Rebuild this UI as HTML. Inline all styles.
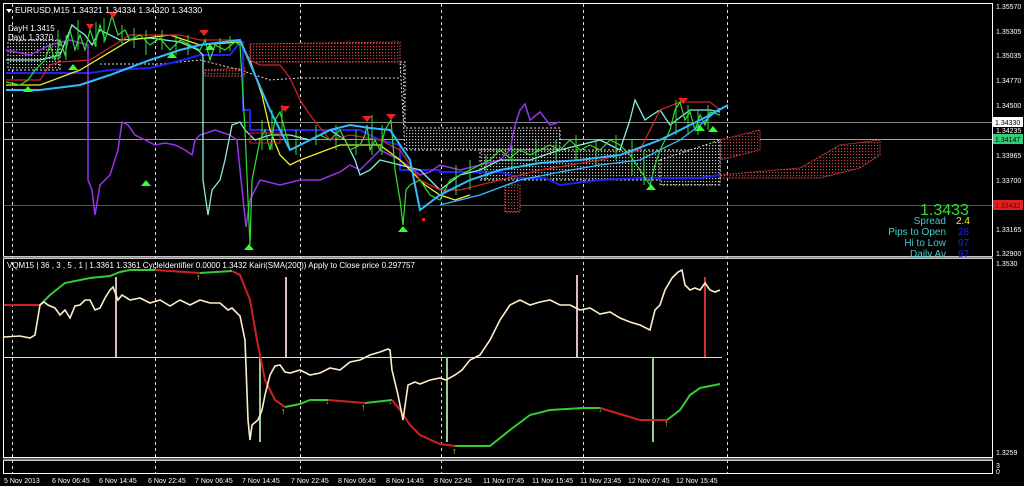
<!DOCTYPE html>
<html><head><meta charset="utf-8"><style>
html,body{margin:0;padding:0;background:#000;width:1024px;height:486px;overflow:hidden}
svg{display:block}
text{font-family:"Liberation Sans",sans-serif}
</style></head><body>
<svg width="1024" height="486" viewBox="0 0 1024 486" xmlns="http://www.w3.org/2000/svg">
<defs>
<pattern id="rd" width="3" height="3" patternUnits="userSpaceOnUse"><rect width="3" height="3" fill="#000"/><rect x="1" y="1" width="1.2" height="1.2" fill="#c44"/></pattern>
<pattern id="wd" width="3" height="3" patternUnits="userSpaceOnUse"><rect width="3" height="3" fill="#000"/><rect x="1" y="1" width="1.2" height="1.2" fill="#ccc"/></pattern>
</defs>
<rect width="1024" height="486" fill="#000"/>
<rect x="3.5" y="3.5" width="989" height="253" fill="none" stroke="#fff" stroke-width="1"/>
<rect x="3.5" y="258.5" width="989" height="199" fill="none" stroke="#fff" stroke-width="1"/>
<rect x="3.5" y="460.5" width="989" height="13" fill="none" stroke="#fff" stroke-width="1"/>
<line x1="3" y1="257.5" x2="993" y2="257.5" stroke="#888" stroke-width="2"/>
<line x1="3" y1="459.5" x2="993" y2="459.5" stroke="#888" stroke-width="2"/>
<g stroke="#ddd" stroke-dasharray="3,3" stroke-width="1">
<line x1="12.5" y1="4" x2="12.5" y2="473"/><line x1="155.5" y1="4" x2="155.5" y2="473"/>
<line x1="300.5" y1="4" x2="300.5" y2="473"/><line x1="441.5" y1="4" x2="441.5" y2="473"/>
<line x1="583.5" y1="4" x2="583.5" y2="473"/><line x1="727.5" y1="4" x2="727.5" y2="473"/>
</g>
<line x1="4" y1="122.5" x2="992" y2="122.5" stroke="#888"/>
<line x1="4" y1="139.5" x2="992" y2="139.5" stroke="#6c6"/>
<line x1="4" y1="205.5" x2="992" y2="205.5" stroke="#c22"/>
<g stroke="#c44" stroke-dasharray="2,1" stroke-width="1">
<path d="M250 44 L400 42 L400 62 L250 62 Z" fill="url(#rd)"/>
<path d="M205 70 L245 68 L245 76 L205 76 Z" fill="url(#rd)"/>
<path d="M720 140 L760 130 L760 150 L720 160 Z" fill="url(#rd)"/>
<path d="M720 175 L800 168 L840 145 L880 140 L880 155 L860 168 L820 178 L720 178 Z" fill="url(#rd)"/>
<path d="M505 185 L520 185 L520 212 L505 212 Z" fill="url(#rd)"/>
</g>
<g stroke="#ddd" stroke-dasharray="2,2" stroke-width="1">
<path d="M8 40 L60 40 L60 70 L8 70 Z" fill="url(#wd)"/>
<path d="M400 62 L405 62 L405 128 L460 128 L560 128 L560 150 L460 150 L405 150 Z" fill="url(#wd)"/>
<path d="M480 150 L720 150 L720 180 L600 180 L480 180 Z" fill="url(#wd)"/>
<path d="M660 160 L720 140 L720 185 L660 185 Z" fill="url(#wd)"/>
<path d="M100 64 L160 64 L200 60 L240 70 L270 80 L300 78 L340 78 L400 78" fill="none"/>
</g>
<polyline fill="none" stroke="#22e" stroke-width="2" points="6,73 90,73 110,70 150,68 175,62 200,55 230,55 240,42 243,42 243,110 250,110 250,130 360,130 380,140 400,145 400,170 440,170 440,172 500,172 520,178 545,178 560,185 600,180 640,178 700,178 720,175"/>
<polyline fill="none" stroke="#93e" stroke-width="1.5" points="6,50 30,55 50,45 70,40 88,45 88,180 92,190 95,215 100,185 110,175 118,150 122,122 128,125 135,135 145,140 155,145 165,143 175,145 185,150 192,155 195,140 200,135 215,130 230,135 237,140 240,170 246,227 250,200 260,180 280,185 300,180 320,180 340,172 350,165 360,170 380,150 400,160 420,175 430,172 440,165 460,170 480,165 500,160 510,150 515,125 520,110 525,104 530,120 540,112 550,125 560,122"/>
<polyline fill="none" stroke="#8ed" stroke-width="1.3" points="6,60 40,60 60,55 72,25 78,30 85,35 92,45 100,30 120,40 150,38 180,42 198,50 203,55 203,180 208,215 212,190 220,180 225,160 232,125 240,122 245,130 255,140 270,135 290,135 310,140 330,130 345,140 355,160 360,175 370,170 380,160 400,165 420,170 440,190 460,175 480,170 500,160 530,160 560,150 580,145 600,140 620,150 630,120 635,100 645,120 652,115 660,110 670,125 690,110 710,110 720,112"/>
<polyline fill="none" stroke="#ee3" stroke-width="1.3" points="6,85 40,85 80,70 130,40 170,35 200,45 240,42 250,60 262,95 270,130 280,155 290,165 300,160 340,145 380,145 400,160 410,170 425,185 440,195 455,200 470,195"/>
<polyline fill="none" stroke="#c22" stroke-width="1.3" points="6,80 40,80 50,65 60,62 90,60 130,35 180,35 200,40 240,40 250,60 260,65 280,65 290,78 300,100 310,115 330,140 350,135 380,140 400,150 420,180 440,190 460,190 500,180 540,170 600,160 640,150 660,110 680,102 710,102 720,110"/>
<polyline fill="none" stroke="#3d3" stroke-width="1.2" points="6,82 20,85 28,80 35,70 45,60 50,45 55,60 60,40 65,55 70,30 75,50 80,35 85,50 90,30 95,45 100,25 105,40 112,16 118,35 125,30 130,40 140,35 150,45 160,38 170,50 180,40 190,45 200,50 205,40 210,60 215,45 225,50 235,42 240,45 245,130 248,200 250,245 252,180 256,160 260,140 265,130 270,150 275,120 280,112 285,130 290,150 300,145 310,140 320,135 330,140 340,130 350,150 360,145 365,135 367,125 370,150 375,140 380,150 385,130 391,120 395,170 400,200 403,225 406,190 410,185 420,180 430,195 440,200 450,180 460,175 470,170 480,165 490,160 500,150 510,158 520,150 530,155 540,150 550,145 560,150 570,140 580,150 590,145 600,150 610,140 620,145 630,155 640,170 650,185 655,165 660,150 670,130 675,110 680,102 685,120 690,112 695,130 700,115 705,125 710,112 720,115"/>
<g stroke="#3d3" stroke-width="1">
<path d="M58 30v30M66 35v25M78 20v30M96 22v25M104 18v25M122 25v20M134 28v20M146 30v25M162 30v20M176 35v20M188 35v20M220 38v15M230 36v15M262 120v30M272 110v40M282 105v30M296 130v25M316 125v20M336 125v25M356 130v25M372 115v40M382 125v30M456 165v30M470 160v30M486 155v25M512 145v25M536 140v25M556 140v20M576 135v25M596 140v25M616 135v25M632 140v35M644 150v35M676 100v35M688 105v30M698 110v25M708 105v25"/>
</g>
<polyline fill="none" stroke="#3bf" stroke-width="2" points="6,90 40,90 80,85 110,75 150,60 180,50 200,45 240,40 270,110 290,150 310,140 330,130 350,125 370,128 390,130 410,160 420,210 440,195 470,180 500,170 540,163 580,160 620,155 660,140 690,125 710,115 728,105"/>
<polyline fill="none" stroke="#3bf" stroke-width="1.3" points="440,205 480,195 520,180 560,172 600,165 640,160 680,140 700,125 720,108"/>
<g fill="#e22">
<path d="M86 24 h8 l-4 6z"/><path d="M108 12 h10 l-5 6z"/><path d="M199 30 h10 l-5 6z"/><path d="M280 106 h10 l-5 6z"/><path d="M362 116 h10 l-5 6z"/><path d="M386 114 h10 l-5 6z"/><path d="M678 98 h10 l-5 6z"/>
<rect x="422" y="218" width="3" height="3"/>
</g>
<g fill="#3f3">
<path d="M28 86 l5 6 h-10z"/><path d="M73 64 l5 6 h-10z"/><path d="M172 52 l5 6 h-10z"/><path d="M210 44 l5 6 h-10z"/><path d="M249 244 l5 6 h-10z"/><path d="M403 226 l5 6 h-10z"/><path d="M651 184 l5 6 h-10z"/><path d="M700 125 l5 6 h-10z"/><path d="M713 126 l5 6 h-10z"/><path d="M146 180 l5 6 h-10z"/>
</g>
<rect x="250" y="133" width="30" height="10" fill="none" stroke="#c22"/>
<path d="M6 9 h6 l-3 4z" fill="#fff"/>
<text x="15" y="13" font-size="8.5" fill="#fff">EURUSD,M15  1.34321 1.34334 1.34320 1.34330</text>
<text x="8" y="31" font-size="8" fill="#fff">DayH 1.3415</text>
<text x="8" y="40" font-size="8" fill="#fff">DayL 1.3370</text>
<g font-size="7" fill="#fff">
<text x="996" y="9">1.35570</text><text x="996" y="34">1.35305</text><text x="996" y="58">1.35035</text><text x="996" y="83">1.34770</text><text x="996" y="108">1.34500</text>
<text x="996" y="133">1.34235</text><text x="996" y="158">1.33965</text><text x="996" y="183">1.33700</text><text x="996" y="232">1.33165</text><text x="996" y="256">1.32900</text>
<text x="996" y="266">1.3530</text><text x="996" y="455">1.3259</text><text x="996" y="468">3</text><text x="996" y="474">0</text>
</g>
<rect x="993" y="117" width="30" height="10" fill="#fff"/><text x="995" y="125" font-size="7" fill="#000">1.34330</text>
<rect x="993" y="134" width="30" height="10" fill="#3c7"/><text x="995" y="142" font-size="7" fill="#000">1.34147</text>
<rect x="993" y="200" width="30" height="10" fill="#d22"/><text x="995" y="208" font-size="7" fill="#600">1.33432</text>
<text x="920" y="215" font-size="16" fill="#3d3">1.3433</text>
<g font-size="10" fill="#4cc" text-anchor="end">
<text x="946" y="224">Spread</text><text x="946" y="235">Pips to Open</text><text x="946" y="246">Hi to Low</text><text x="946" y="257">Daily Av</text>
</g>
<text x="956" y="224" font-size="10" fill="#ee3">2.4</text>
<g font-size="10" fill="#22c"><text x="958" y="235">28</text><text x="958" y="246">97</text><text x="958" y="257">97</text></g>
<text x="7" y="268" font-size="8" fill="#fff">VQM15 | 36 , 3 , 5 , 1 | 1.3361 1.3361 CycleIdentifier 0.0000 1.3432 Kairi(SMA(200)) Apply to Close price 0.297757</text>
<line x1="4" y1="357.5" x2="722" y2="357.5" stroke="#ddd"/>
<g stroke="#dbb" stroke-width="2"><line x1="116" y1="277" x2="116" y2="357"/><line x1="286" y1="277" x2="286" y2="357"/><line x1="577" y1="275" x2="577" y2="357"/></g>
<line x1="705" y1="277" x2="705" y2="357" stroke="#c33" stroke-width="2"/>
<g stroke="#9c9" stroke-width="2"><line x1="260" y1="357" x2="260" y2="442"/><line x1="447" y1="357" x2="447" y2="442"/><line x1="653" y1="357" x2="653" y2="442"/></g>
<polyline fill="none" stroke="#c22" stroke-width="2" points="4,305 40,305"/>
<polyline fill="none" stroke="#3c3" stroke-width="2" points="40,305 50,295 65,283 90,278 110,276 120,272 130,270 155,270"/>
<polyline fill="none" stroke="#c22" stroke-width="2" points="155,270 200,273"/>
<polyline fill="none" stroke="#3c3" stroke-width="2" points="200,273 232,271"/>
<polyline fill="none" stroke="#c22" stroke-width="2" points="232,271 240,275 250,300 257,340 265,380 275,400 285,407"/>
<polyline fill="none" stroke="#3c3" stroke-width="2" points="285,407 300,404 310,400 328,400"/>
<polyline fill="none" stroke="#c22" stroke-width="2" points="328,400 365,403"/>
<polyline fill="none" stroke="#3c3" stroke-width="2" points="365,403 392,400"/>
<polyline fill="none" stroke="#c22" stroke-width="2" points="392,400 400,410 410,425 420,435 440,444 455,446"/>
<polyline fill="none" stroke="#3c3" stroke-width="2" points="455,446 490,446 510,430 530,415 550,410 583,408 600,408"/>
<polyline fill="none" stroke="#c22" stroke-width="2" points="600,408 640,420 667,420"/>
<polyline fill="none" stroke="#3c3" stroke-width="2" points="667,420 680,410 690,395 700,388 720,384"/>
<polyline fill="none" stroke="#fec" stroke-width="1.6" points="4,337 20,336 30,338 35,335 40,305 44,302 48,305 55,308 60,315 65,310 70,318 75,306 80,305 85,300 90,300 95,310 100,308 105,298 110,290 113,287 118,300 122,295 130,300 140,298 150,303 160,300 170,306 180,300 190,305 200,300 210,303 220,303 228,310 232,308 240,316 245,340 248,420 250,440 252,425 258,420 262,410 265,395 270,375 275,366 280,365 285,372 290,373 300,370 310,375 320,373 330,368 340,370 350,362 360,360 370,355 380,352 388,349 390,350 392,370 398,395 403,420 408,385 415,382 420,384 430,380 440,378 446,380 455,375 462,370 470,360 480,355 490,340 500,320 510,305 520,300 530,305 540,302 550,300 560,305 570,305 580,310 590,308 600,314 610,312 620,318 630,322 640,325 650,330 655,310 660,305 665,290 672,278 678,272 682,270 685,285 690,290 695,288 700,290 705,283 710,290 715,292 720,290"/>
<g fill="#ee3" font-size="9"><text x="37" y="313">↑</text><text x="196" y="280">↑</text><text x="281" y="414">↑</text><text x="361" y="410">↑</text><text x="452" y="454">↑</text><text x="664" y="426">↑</text></g>
<g fill="#3bd" font-size="9"><text x="151" y="270">↓</text><text x="228" y="272">↓</text><text x="325" y="404">↓</text><text x="388" y="404">↓</text><text x="598" y="412">↓</text></g>
<g font-size="7" fill="#fff">
<text x="4" y="483">5 Nov 2013</text><text x="52" y="483">6 Nov 06:45</text><text x="99" y="483">6 Nov 14:45</text><text x="148" y="483">6 Nov 22:45</text><text x="195" y="483">7 Nov 06:45</text><text x="242" y="483">7 Nov 14:45</text><text x="291" y="483">7 Nov 22:45</text><text x="338" y="483">8 Nov 06:45</text><text x="386" y="483">8 Nov 14:45</text><text x="434" y="483">8 Nov 22:45</text><text x="483" y="483">11 Nov 07:45</text><text x="532" y="483">11 Nov 15:45</text><text x="580" y="483">11 Nov 23:45</text><text x="628" y="483">12 Nov 07:45</text><text x="676" y="483">12 Nov 15:45</text>
</g>
</svg>
</body></html>
